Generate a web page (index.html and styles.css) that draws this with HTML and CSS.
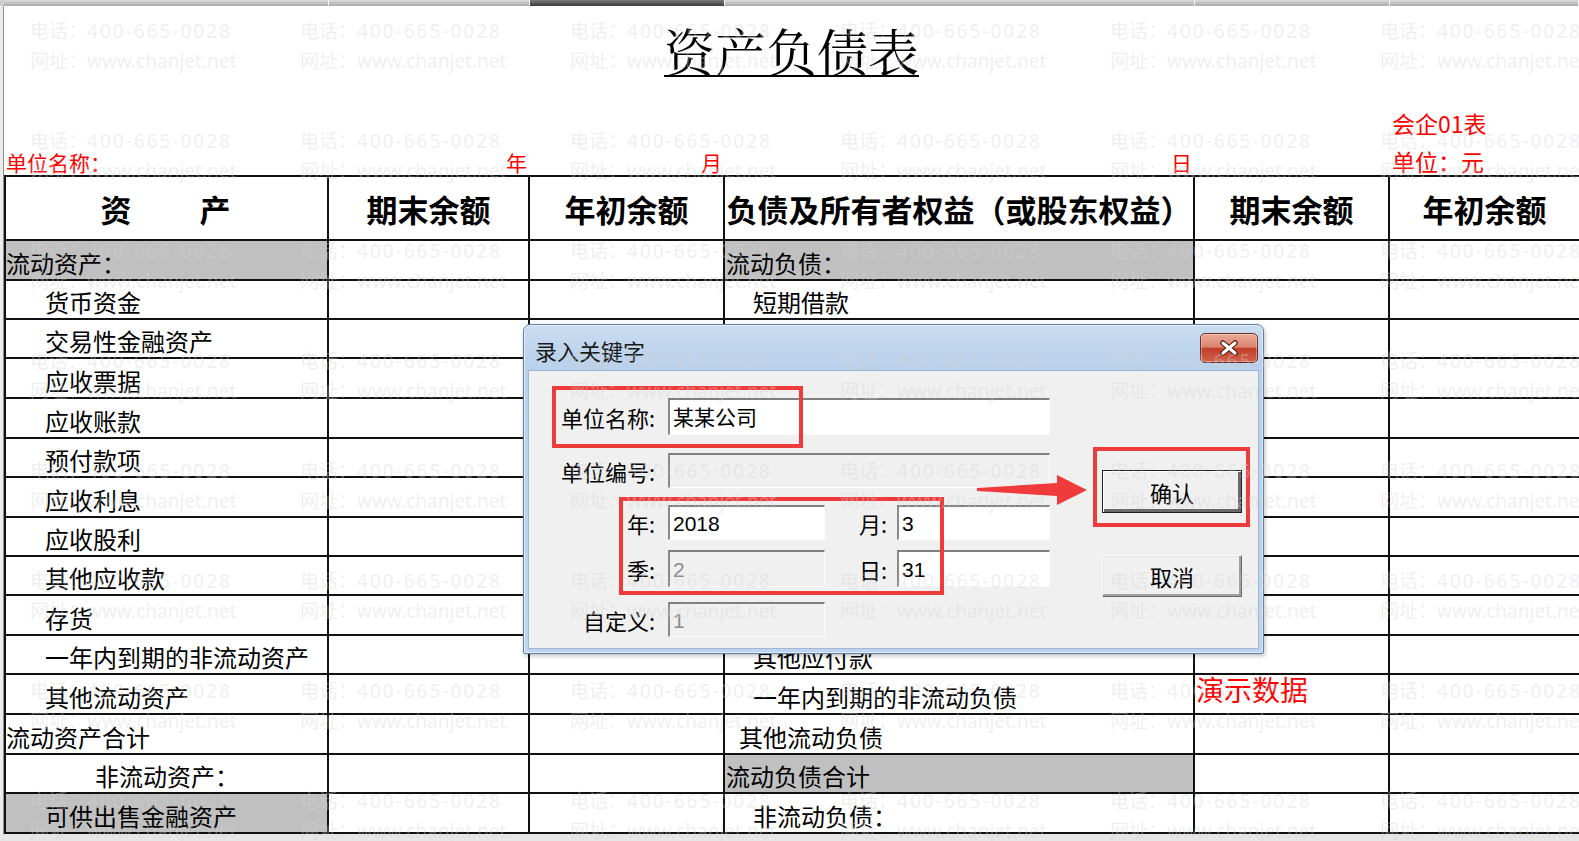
FILE: index.html
```html
<!DOCTYPE html>
<html lang="zh-CN">
<head>
<meta charset="utf-8">
<title>资产负债表</title>
<link rel="stylesheet" href="styles.css">
</head>
<body>
<div class="app">
  <div class="col-heads">
    <span class="ch ch-corner"></span>
    <span class="ch"></span>
    <span class="ch"></span>
    <span class="ch ch-active"></span>
    <span class="ch"></span>
    <span class="ch"></span>
    <span class="ch"></span>
  </div>

  <div class="workarea">
    <div class="row-heads"></div>
    <div class="sheet">
      <div class="title-row"><span class="title">资产负债表</span></div>

      <div class="meta-row meta-form">
        <span></span><span></span><span></span><span></span><span></span>
        <span class="red red-lg pad-l">会企01表</span>
      </div>
      <div class="meta-row meta-unit">
        <span class="red pad-l">单位名称：</span>
        <span class="red pad-r">年</span>
        <span class="red pad-r">月</span>
        <span class="red pad-r">日</span>
        <span></span>
        <span class="red red-lg pad-l">单位：元</span>
      </div>

      <div class="grid">
        <div class="c hd spaced">资　　产</div><div class="c hd">期末余额</div><div class="c hd">年初余额</div><div class="c hd">负债及所有者权益（或股东权益）</div><div class="c hd">期末余额</div><div class="c hd">年初余额</div>

        <div class="c gray i0">流动资产：</div><div class="c"></div><div class="c"></div><div class="c gray r0">流动负债：</div><div class="c"></div><div class="c"></div>
        <div class="c i2">货币资金</div><div class="c"></div><div class="c"></div><div class="c r2">短期借款</div><div class="c"></div><div class="c"></div>
        <div class="c i2">交易性金融资产</div><div class="c"></div><div class="c"></div><div class="c r2">交易性金融负债</div><div class="c"></div><div class="c"></div>
        <div class="c i2">应收票据</div><div class="c"></div><div class="c"></div><div class="c r2">应付票据</div><div class="c"></div><div class="c"></div>
        <div class="c i2">应收账款</div><div class="c"></div><div class="c"></div><div class="c r2">应付账款</div><div class="c"></div><div class="c"></div>
        <div class="c i2">预付款项</div><div class="c"></div><div class="c"></div><div class="c r2">预收款项</div><div class="c"></div><div class="c"></div>
        <div class="c i2">应收利息</div><div class="c"></div><div class="c"></div><div class="c r2">应付职工薪酬</div><div class="c"></div><div class="c"></div>
        <div class="c i2">应收股利</div><div class="c"></div><div class="c"></div><div class="c r2">应交税费</div><div class="c"></div><div class="c"></div>
        <div class="c i2">其他应收款</div><div class="c"></div><div class="c"></div><div class="c r2">应付利息</div><div class="c"></div><div class="c"></div>
        <div class="c i2">存货</div><div class="c"></div><div class="c"></div><div class="c r2">应付股利</div><div class="c"></div><div class="c"></div>
        <div class="c i2">一年内到期的非流动资产</div><div class="c"></div><div class="c"></div><div class="c r2">其他应付款</div><div class="c"></div><div class="c"></div>
        <div class="c i2">其他流动资产</div><div class="c"></div><div class="c"></div><div class="c r2">一年内到期的非流动负债</div><div class="c demo">演示数据</div><div class="c"></div>
        <div class="c i0">流动资产合计</div><div class="c"></div><div class="c"></div><div class="c r1">其他流动负债</div><div class="c"></div><div class="c"></div>
        <div class="c i3">非流动资产：</div><div class="c"></div><div class="c"></div><div class="c gray r0">流动负债合计</div><div class="c"></div><div class="c"></div>
        <div class="c gray i2">可供出售金融资产</div><div class="c"></div><div class="c"></div><div class="c r2">非流动负债：</div><div class="c"></div><div class="c"></div>
      </div>
    </div>
  </div>

  <div class="dialog">
    <div class="dlg-title">
      <span class="dlg-caption">录入关键字</span>
      <span class="dlg-close">
        <svg width="22" height="16" viewBox="0 0 22 16" aria-hidden="true">
          <path d="M5 3 L17 13 M17 3 L5 13" stroke="#5b2016" stroke-width="5.5" stroke-linecap="round" fill="none"/>
          <path d="M5 3 L17 13 M17 3 L5 13" stroke="#ffffff" stroke-width="3" stroke-linecap="round" fill="none"/>
        </svg>
      </span>
    </div>
    <div class="dlg-body">
      <div class="dlg-form">
        <div class="f-row f-name">
          <span class="f-label">单位名称:</span>
          <span class="f-input f-wide">某某公司</span>
        </div>
        <div class="f-row f-code">
          <span class="f-label">单位编号:</span>
          <span class="f-input f-wide is-disabled"></span>
        </div>
        <div class="f-row f-ym">
          <span class="f-label">年:</span>
          <span class="f-input f-short">2018</span>
          <span class="f-label2">月:</span>
          <span class="f-input f-short2">3</span>
        </div>
        <div class="f-row f-qd">
          <span class="f-label">季:</span>
          <span class="f-input f-short is-disabled">2</span>
          <span class="f-label2">日:</span>
          <span class="f-input f-short2">31</span>
        </div>
        <div class="f-row f-custom">
          <span class="f-label">自定义:</span>
          <span class="f-input f-short is-disabled">1</span>
        </div>
      </div>
      <div class="dlg-buttons">
        <span class="btn btn-default">确认</span>
        <span class="btn">取消</span>
      </div>
    </div>
  </div>

  <!-- red call-outs drawn over the dialog -->
  <div class="mark mark-name"></div>
  <div class="mark mark-date"></div>
  <div class="mark mark-ok"></div>
  <svg class="mark-arrow" width="115" height="36" viewBox="0 0 115 36" aria-hidden="true">
    <path d="M2 16 L82 11 L82 3 L112 18 L82 33 L82 24 L2 19 Z" fill="#ef3b3b"/>
  </svg>

  <div class="watermark">
    <div class="wm"><span>电话：<b>400-665-0028</b></span><span>网址：www.chanjet.net</span></div>
    <div class="wm"><span>电话：<b>400-665-0028</b></span><span>网址：www.chanjet.net</span></div>
    <div class="wm"><span>电话：<b>400-665-0028</b></span><span>网址：www.chanjet.net</span></div>
    <div class="wm"><span>电话：<b>400-665-0028</b></span><span>网址：www.chanjet.net</span></div>
    <div class="wm"><span>电话：<b>400-665-0028</b></span><span>网址：www.chanjet.net</span></div>
    <div class="wm"><span>电话：<b>400-665-0028</b></span><span>网址：www.chanjet.net</span></div>
    <div class="wm"><span>电话：<b>400-665-0028</b></span><span>网址：www.chanjet.net</span></div>
    <div class="wm"><span>电话：<b>400-665-0028</b></span><span>网址：www.chanjet.net</span></div>
    <div class="wm"><span>电话：<b>400-665-0028</b></span><span>网址：www.chanjet.net</span></div>
    <div class="wm"><span>电话：<b>400-665-0028</b></span><span>网址：www.chanjet.net</span></div>
    <div class="wm"><span>电话：<b>400-665-0028</b></span><span>网址：www.chanjet.net</span></div>
    <div class="wm"><span>电话：<b>400-665-0028</b></span><span>网址：www.chanjet.net</span></div>
    <div class="wm"><span>电话：<b>400-665-0028</b></span><span>网址：www.chanjet.net</span></div>
    <div class="wm"><span>电话：<b>400-665-0028</b></span><span>网址：www.chanjet.net</span></div>
    <div class="wm"><span>电话：<b>400-665-0028</b></span><span>网址：www.chanjet.net</span></div>
    <div class="wm"><span>电话：<b>400-665-0028</b></span><span>网址：www.chanjet.net</span></div>
    <div class="wm"><span>电话：<b>400-665-0028</b></span><span>网址：www.chanjet.net</span></div>
    <div class="wm"><span>电话：<b>400-665-0028</b></span><span>网址：www.chanjet.net</span></div>
    <div class="wm"><span>电话：<b>400-665-0028</b></span><span>网址：www.chanjet.net</span></div>
    <div class="wm"><span>电话：<b>400-665-0028</b></span><span>网址：www.chanjet.net</span></div>
    <div class="wm"><span>电话：<b>400-665-0028</b></span><span>网址：www.chanjet.net</span></div>
    <div class="wm"><span>电话：<b>400-665-0028</b></span><span>网址：www.chanjet.net</span></div>
    <div class="wm"><span>电话：<b>400-665-0028</b></span><span>网址：www.chanjet.net</span></div>
    <div class="wm"><span>电话：<b>400-665-0028</b></span><span>网址：www.chanjet.net</span></div>
    <div class="wm"><span>电话：<b>400-665-0028</b></span><span>网址：www.chanjet.net</span></div>
    <div class="wm"><span>电话：<b>400-665-0028</b></span><span>网址：www.chanjet.net</span></div>
    <div class="wm"><span>电话：<b>400-665-0028</b></span><span>网址：www.chanjet.net</span></div>
    <div class="wm"><span>电话：<b>400-665-0028</b></span><span>网址：www.chanjet.net</span></div>
    <div class="wm"><span>电话：<b>400-665-0028</b></span><span>网址：www.chanjet.net</span></div>
    <div class="wm"><span>电话：<b>400-665-0028</b></span><span>网址：www.chanjet.net</span></div>
    <div class="wm"><span>电话：<b>400-665-0028</b></span><span>网址：www.chanjet.net</span></div>
    <div class="wm"><span>电话：<b>400-665-0028</b></span><span>网址：www.chanjet.net</span></div>
    <div class="wm"><span>电话：<b>400-665-0028</b></span><span>网址：www.chanjet.net</span></div>
    <div class="wm"><span>电话：<b>400-665-0028</b></span><span>网址：www.chanjet.net</span></div>
    <div class="wm"><span>电话：<b>400-665-0028</b></span><span>网址：www.chanjet.net</span></div>
    <div class="wm"><span>电话：<b>400-665-0028</b></span><span>网址：www.chanjet.net</span></div>
    <div class="wm"><span>电话：<b>400-665-0028</b></span><span>网址：www.chanjet.net</span></div>
    <div class="wm"><span>电话：<b>400-665-0028</b></span><span>网址：www.chanjet.net</span></div>
    <div class="wm"><span>电话：<b>400-665-0028</b></span><span>网址：www.chanjet.net</span></div>
    <div class="wm"><span>电话：<b>400-665-0028</b></span><span>网址：www.chanjet.net</span></div>
    <div class="wm"><span>电话：<b>400-665-0028</b></span><span>网址：www.chanjet.net</span></div>
    <div class="wm"><span>电话：<b>400-665-0028</b></span><span>网址：www.chanjet.net</span></div>
    <div class="wm"><span>电话：<b>400-665-0028</b></span><span>网址：www.chanjet.net</span></div>
    <div class="wm"><span>电话：<b>400-665-0028</b></span><span>网址：www.chanjet.net</span></div>
    <div class="wm"><span>电话：<b>400-665-0028</b></span><span>网址：www.chanjet.net</span></div>
    <div class="wm"><span>电话：<b>400-665-0028</b></span><span>网址：www.chanjet.net</span></div>
    <div class="wm"><span>电话：<b>400-665-0028</b></span><span>网址：www.chanjet.net</span></div>
    <div class="wm"><span>电话：<b>400-665-0028</b></span><span>网址：www.chanjet.net</span></div>
  </div>
</div>
</body>
</html>
```

FILE: styles.css
```css
* { box-sizing: border-box; margin: 0; padding: 0; }

html, body { width: 1579px; height: 841px; overflow: hidden; }

body {
  background: #e6e6e6;
  font-family: "Noto Sans CJK SC", "Noto Sans", sans-serif;
  color: #000;
}

.app {
  position: relative;
  width: 1579px;
  height: 841px;
  overflow: hidden;
  background: #e6e6e6;
}

/* spreadsheet column header strip */
.col-heads {
  display: grid;
  grid-template-columns: 4px 325px 201px 195px 470px 195px 1fr;
  height: 6px;
}
.ch {
  background: linear-gradient(#dcdcdc, #a8a8a8);
  border-right: 1px solid #f2f2f2;
}
.ch-corner { background: #cfcfcf; border-right: 0; }
.ch-active { background: linear-gradient(#7c7c7c, #3a3a3a); }

.workarea { display: flex; }
.row-heads {
  width: 4px;
  background: #ececec;
  border-right: 1px solid #8f8f8f;
}
.sheet { flex: 1; background: #fff; }

/* report heading */
.title-row {
  height: 99px;
  display: flex;
  justify-content: center;
  padding-top: 19px;
}
.title {
  font-family: "Noto Serif CJK SC", "Noto Sans CJK SC", serif;
  font-size: 51px;
  line-height: 51px;
  height: 51px;
  text-decoration: underline;
  text-decoration-thickness: 2px;
  text-underline-offset: 3px;
}

.meta-row {
  display: grid;
  grid-template-columns: 325px 201px 195px 470px 195px 1fr;
  height: 35px;
  align-items: end;
}
.meta-form { padding-bottom: 5px; }
.meta-unit { padding-bottom: 2px; }

.red {
  color: #ff0000;
  font-size: 21px;
  line-height: 21px;
  white-space: nowrap;
}
.red-lg { font-size: 23px; line-height: 23px; }
.pad-l { padding-left: 2px; }
.pad-r { padding-right: 3px; text-align: right; }

/* balance sheet table */
.grid {
  display: grid;
  grid-template-columns: 323px 201px 195px 470px 195px 1fr;
  grid-template-rows: 64px 40px 39px 39px 40px 40px 39px 40px 39px 39px 40px 39px 40px 40px 39px 40px;
  border-top: 2px solid #111;
  border-left: 2px solid #111;
}
.c {
  border-right: 2px solid #111;
  border-bottom: 2px solid #111;
  display: flex;
  align-items: flex-end;
  font-size: 24px;
  line-height: 24px;
  padding-bottom: 4px;
  white-space: nowrap;
  background: #fff;
}
.c:nth-child(6n) { border-right: 0; }
.hd {
  align-items: center;
  justify-content: center;
  font-size: 31px;
  line-height: 31px;
  font-weight: 700;
  padding-bottom: 0;
}
.spaced { letter-spacing: 2px; }
.gray { background: #c0c0c0; }
.i0 { padding-left: 0; }
.i2 { padding-left: 39px; }
.i3 { padding-left: 89px; }
.r0 { padding-left: 1px; }
.r1 { padding-left: 14px; }
.r2 { padding-left: 28px; }
.demo {
  color: #ff0000;
  font-size: 28px;
  line-height: 28px;
  align-items: flex-start;
  padding: 0 0 0 1px;
}

/* keyword entry dialog */
.dialog {
  position: absolute;
  left: 523px;
  top: 324px;
  width: 741px;
  height: 330px;
  border: 1px solid #5f80aa;
  border-radius: 7px 7px 2px 2px;
  background: linear-gradient(#c9dcf0, #b8d0ea 45px, #bdd4ed);
  padding: 0 4px 4px;
  display: flex;
  flex-direction: column;
  box-shadow: inset 0 0 0 1px rgba(255, 255, 255, 0.55), 1px 2px 4px rgba(0, 0, 0, 0.25);
}
.dlg-title {
  height: 45px;
  display: flex;
  justify-content: space-between;
  align-items: flex-start;
  padding-left: 7px;
  padding-right: 1px;
}
.dlg-caption {
  margin-top: 14px;
  font-size: 22px;
  line-height: 22px;
  color: #1b1b1b;
}
.dlg-close {
  margin-top: 8px;
  width: 58px;
  height: 30px;
  border: 1px solid #6e2a1f;
  border-radius: 5px;
  background: linear-gradient(#eaa998 0%, #dd8470 46%, #c33f2a 52%, #d0614a 100%);
  box-shadow: inset 0 0 0 1px rgba(255, 255, 255, 0.35);
  display: flex;
  align-items: center;
  justify-content: center;
}

.dlg-body {
  flex: 1;
  background: #f0f0f0;
  box-shadow: inset 0 0 0 1px #9fb7d5;
  display: flex;
  padding-top: 28px;
}
.dlg-form {
  width: 522px;
  display: flex;
  flex-direction: column;
}
.f-row { display: flex; align-items: center; }
.f-name { height: 37px; }
.f-code { height: 35px; margin-top: 18px; }
.f-ym { height: 35px; margin-top: 17px; }
.f-qd { height: 37px; margin-top: 10px; }
.f-custom { height: 35px; margin-top: 15px; }

.f-label {
  width: 140px;
  padding-right: 13px;
  text-align: right;
  font-size: 22px;
  line-height: 22px;
  white-space: nowrap;
}
.f-label2 {
  width: 72px;
  padding-right: 10px;
  text-align: right;
  font-size: 22px;
  line-height: 22px;
}
.f-input {
  height: 100%;
  display: flex;
  align-items: center;
  padding-left: 3px;
  background: #fff;
  border-top: 2px solid #7f7f7f;
  border-left: 2px solid #8a8a8a;
  border-right: 1px solid #fdfdfd;
  border-bottom: 1px solid #fdfdfd;
  font-family: "Liberation Sans", "Noto Sans CJK SC", sans-serif;
  font-size: 21px;
  line-height: 21px;
  color: #000;
}
.f-input.is-disabled { background: #f0f0f0; color: #8c8c8c; }
.f-wide { width: 382px; }
.f-short { width: 157px; }
.f-short2 { width: 153px; }

.dlg-buttons {
  margin-left: 52px;
  padding-top: 72px;
  display: flex;
  flex-direction: column;
  gap: 42px;
}
.btn {
  width: 140px;
  height: 42px;
  display: flex;
  align-items: center;
  justify-content: center;
  font-size: 22px;
  line-height: 22px;
  background: #f0f0f0;
  border: 1px solid;
  border-color: #fdfdfd #6a6a6a #6a6a6a #fdfdfd;
  box-shadow: inset -2px -2px 0 #a0a0a0, inset 1px 1px 0 #e6e6e6;
}
.btn-default {
  height: 43px;
  border-color: #1e1e1e;
  box-shadow: inset 1px 1px 0 #ffffff, inset -3px -3px 0 #6a6a6a;
}

/* red call-outs */
.mark {
  position: absolute;
  border: 4px solid #ee3c3c;
}
.mark-name { left: 552px; top: 386px; width: 251px; height: 62px; }
.mark-date { left: 619px; top: 497px; width: 325px; height: 98px; }
.mark-ok { left: 1093px; top: 447px; width: 157px; height: 80px; }
.mark-arrow { position: absolute; left: 975px; top: 472px; }

/* faint contact watermark tiled over the window */
.watermark {
  position: absolute;
  inset: 0;
  display: grid;
  grid-template-columns: repeat(6, 270px);
  grid-auto-rows: 110px;
  padding: 16px 0 0 30px;
  overflow: hidden;
  pointer-events: none;
  color: rgba(211, 211, 211, 0.37);
  font-family: "Noto Sans", "Noto Sans CJK SC", sans-serif;
  font-size: 19px;
  line-height: 30px;
}
.wm { display: flex; flex-direction: column; white-space: nowrap; }
.wm b { font-weight: 400; letter-spacing: 2px; }
```
